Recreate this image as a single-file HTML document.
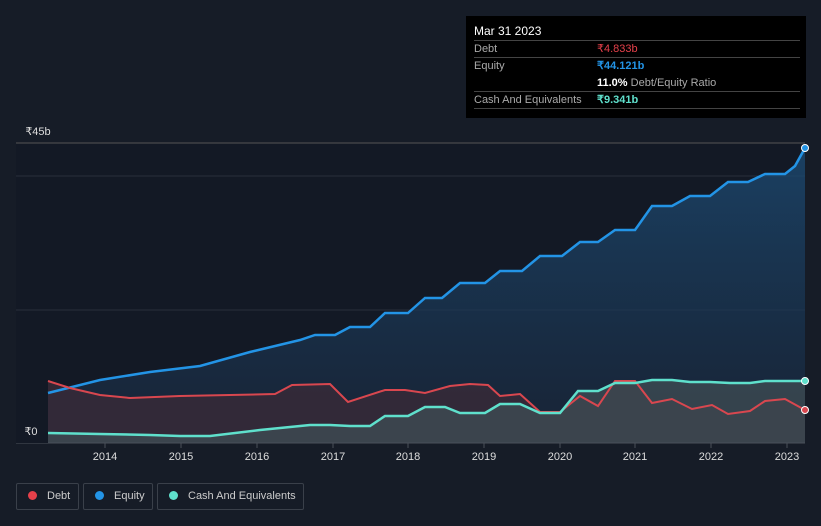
<!DOCTYPE html>
<html><head><meta charset="utf-8"><style>
html,body{margin:0;width:821px;height:526px;background:#161c27;font-family:"Liberation Sans",sans-serif;overflow:hidden;position:relative}
.tip{position:absolute;left:466px;top:16px;width:340px;height:102px;background:#000;color:#fff;font-size:11px}
.row{position:absolute;left:8px;width:326px;border-top:1px solid #444;height:17px;line-height:17px;color:#aaa}
.leg{position:absolute;top:483px;height:27px;border:1px solid #3a404a;border-radius:2px;color:#ccc;font-size:11px;line-height:25px;box-sizing:border-box;white-space:nowrap}
.dot{display:inline-block;width:9px;height:9px;border-radius:50%;margin:0 10px 0 11px;vertical-align:-1px}
</style></head><body>
<svg width="821" height="526" style="position:absolute;left:0;top:0">
<defs>
<linearGradient id="eq" x1="0" y1="0" x2="0" y2="1"><stop offset="0" stop-color="#1c4a72" stop-opacity=".8"/><stop offset="1" stop-color="#1a2a40" stop-opacity=".6"/></linearGradient>
</defs>
<rect x="16" y="143" width="789" height="300" fill="#131925"/>
<line x1="16" y1="143" x2="805" y2="143" fill="none" stroke="#555" stroke-width="1"/>
<line x1="16" y1="176" x2="805" y2="176" stroke="#2a303b"/>
<line x1="16" y1="310" x2="805" y2="310" stroke="#2a303b"/>
<polygon fill="url(#eq)" points="48,393 100,380 150,372 200,366 250,352 300,340 315,335 335,335 350,327 370,327 385,313 408,313 425,298 442,298 460,283 485,283 500,271 522,271 540,256 562,256 580,242 598,242 615,230 635,230 652,206 672,206 690,196 710,196 728,182 748,182 765,174 785,174 795,166 805,148 805,443 48,443"/>
<polygon fill="#3a2a38" opacity=".8" points="48,381 70,388 100,395 130,398 180,396 230,395 275,394 292,385 330,384 348,402 385,390 405,390 425,393 450,386 470,384 488,385 500,396 520,394 540,412 560,412 580,396 598,406 615,381 635,381 652,403 672,399 692,409 712,405 728,414 750,411 765,401 785,399 805,410 805,443 48,443"/>
<polygon fill="#3d4b52" opacity=".8" points="48,433 100,434 150,435 180,436 210,436 260,430 310,425 330,425 350,426 370,426 385,416 408,416 425,407 445,407 460,413 485,413 500,404 520,404 540,413 560,413 578,391 598,391 615,383 635,383 652,380 672,380 690,382 710,382 730,383 750,383 765,381 805,381 805,443 48,443"/>
<polyline fill="none" stroke="#2394e6" stroke-width="2.5" points="48,393 100,380 150,372 200,366 250,352 300,340 315,335 335,335 350,327 370,327 385,313 408,313 425,298 442,298 460,283 485,283 500,271 522,271 540,256 562,256 580,242 598,242 615,230 635,230 652,206 672,206 690,196 710,196 728,182 748,182 765,174 785,174 795,166 805,148"/>
<polyline fill="none" stroke="#d9474f" stroke-width="2" points="48,381 70,388 100,395 130,398 180,396 230,395 275,394 292,385 330,384 348,402 385,390 405,390 425,393 450,386 470,384 488,385 500,396 520,394 540,412 560,412 580,396 598,406 615,381 635,381 652,403 672,399 692,409 712,405 728,414 750,411 765,401 785,399 805,410"/>
<polyline fill="none" stroke="#5fe0cc" stroke-width="2.5" points="48,433 100,434 150,435 180,436 210,436 260,430 310,425 330,425 350,426 370,426 385,416 408,416 425,407 445,407 460,413 485,413 500,404 520,404 540,413 560,413 578,391 598,391 615,383 635,383 652,380 672,380 690,382 710,382 730,383 750,383 765,381 805,381"/>
<circle cx="805" cy="148" r="3.5" fill="#2394e6" stroke="#fff" stroke-width="1"/>
<circle cx="805" cy="410" r="3.5" fill="#d9474f" stroke="#fff" stroke-width="1"/>
<circle cx="805" cy="381" r="3.5" fill="#5fe0cc" stroke="#fff" stroke-width="1"/>
<line x1="16" y1="443" x2="805" y2="443" stroke="#4a505a"/>
<rect x="16" y="421" width="32" height="22" fill="#131925"/>
<g stroke="#4a505a"><line x1="105" y1="443" x2="105" y2="448"/><line x1="181" y1="443" x2="181" y2="448"/><line x1="257" y1="443" x2="257" y2="448"/><line x1="333" y1="443" x2="333" y2="448"/><line x1="408" y1="443" x2="408" y2="448"/><line x1="484" y1="443" x2="484" y2="448"/><line x1="560" y1="443" x2="560" y2="448"/><line x1="635" y1="443" x2="635" y2="448"/><line x1="711" y1="443" x2="711" y2="448"/><line x1="787" y1="443" x2="787" y2="448"/></g>
<g fill="#ddd" font-size="11" font-family="Liberation Sans,sans-serif" text-anchor="middle">
<text x="105" y="460">2014</text><text x="181" y="460">2015</text><text x="257" y="460">2016</text><text x="333" y="460">2017</text><text x="408" y="460">2018</text><text x="484" y="460">2019</text><text x="560" y="460">2020</text><text x="635" y="460">2021</text><text x="711" y="460">2022</text><text x="787" y="460">2023</text>
<text x="38" y="135">₹45b</text><text x="31" y="435">₹0</text>
</g>
</svg>
<div class="tip">
<div style="position:absolute;left:8px;top:8px;font-size:12px">Mar 31 2023</div>
<div class="row" style="top:24px">Debt<span style="position:absolute;left:123px;color:#e5404a">₹4.833b</span></div>
<div class="row" style="top:41px">Equity<span style="position:absolute;left:123px;color:#2394e6;font-weight:bold">₹44.121b</span></div>
<div style="position:absolute;left:131px;top:59px;height:17px;line-height:17px;color:#aaa"><b style="color:#fff">11.0%</b> Debt/Equity Ratio</div>
<div class="row" style="top:75px">Cash And Equivalents<span style="position:absolute;left:123px;color:#5fe0cc;font-weight:bold">₹9.341b</span></div>
<div class="row" style="top:92px;height:0"></div>
</div>
<div class="leg" style="left:16px;width:63px"><span class="dot" style="background:#e5404a"></span>Debt</div>
<div class="leg" style="left:83px;width:70px"><span class="dot" style="background:#2394e6"></span>Equity</div>
<div class="leg" style="left:157px;width:147px"><span class="dot" style="background:#5fe0cc"></span>Cash And Equivalents</div>
</body></html>
